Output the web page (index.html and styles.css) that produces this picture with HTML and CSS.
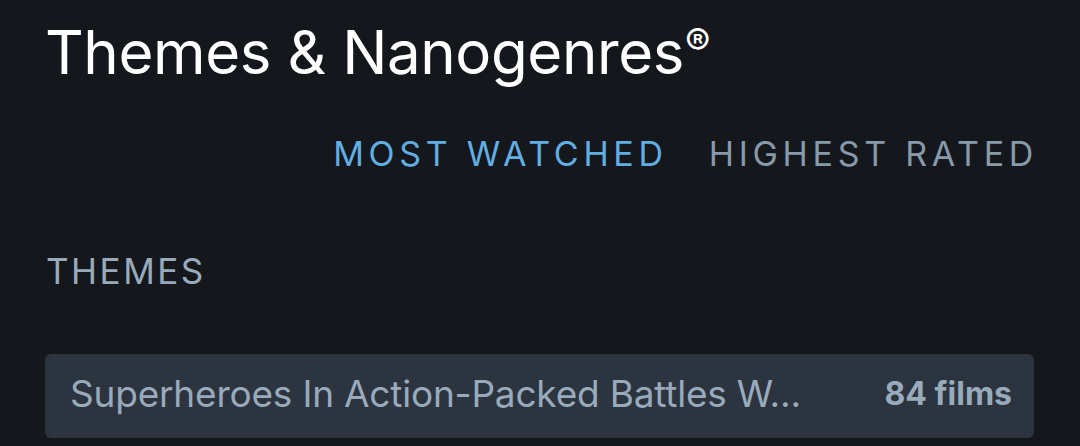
FILE: index.html
```html
<!DOCTYPE html>
<html>
<head>
<meta charset="utf-8">
<link rel="stylesheet" href="styles.css">
</head>
<body>
<div class="page">
  <h1 class="title">Themes &amp; Nanogenres<sup class="reg">®</sup></h1>
  <nav class="tabs">
    <a class="tab active">MOST WATCHED</a>
    <a class="tab">HIGHEST RATED</a>
  </nav>
  <h2 class="section">THEMES</h2>
  <div class="card">
    <span class="name">Superheroes In Action-Packed Battles W...</span>
    <span class="count">84 films</span>
  </div>
</div>
</body>
</html>
```
FILE: styles.css
```css
html, body {
  margin: 0;
  padding: 0;
  background: #14181c;
}
.page {
  padding: 0 46px 0 45px;
  font-family: Inter, Roboto, "Liberation Sans", sans-serif;
  height: 446px;
  overflow: hidden;
}
.title {
  margin: 0;
  padding-top: 16px;
  font-size: 60px;
  font-weight: 400;
  letter-spacing: -0.4px;
  line-height: 72px;
  color: #ffffff;
}
.reg {
  font-size: 38px;
  vertical-align: top;
  line-height: 38px;
  position: relative;
  top: 7px;
  margin-left: 1px;
}
.tabs {
  display: flex;
  justify-content: flex-end;
  gap: 41px;
  margin-top: 46px;
  margin-right: -4px;
}
.tab {
  font-size: 34px;
  letter-spacing: 4.7px;
  line-height: 40px;
  color: #8899aa;
}
.tab.active {
  color: #62aee2;
}
.section {
  margin: 77px 0 0 1px;
  font-size: 35px;
  font-weight: 400;
  letter-spacing: 2.5px;
  line-height: 40px;
  color: #99aabb;
}
.card {
  box-sizing: border-box;
  margin-top: 63px;
  background: #2c3440;
  border-radius: 6px;
  height: 84px;
  display: flex;
  align-items: center;
  justify-content: space-between;
  padding: 0 22px 5px 25px;
}
.name {
  font-size: 37px;
  letter-spacing: -0.2px;
  color: #99aabb;
}
.count {
  font-size: 32px;
  font-weight: 700;
  color: #99aabb;
}
```
